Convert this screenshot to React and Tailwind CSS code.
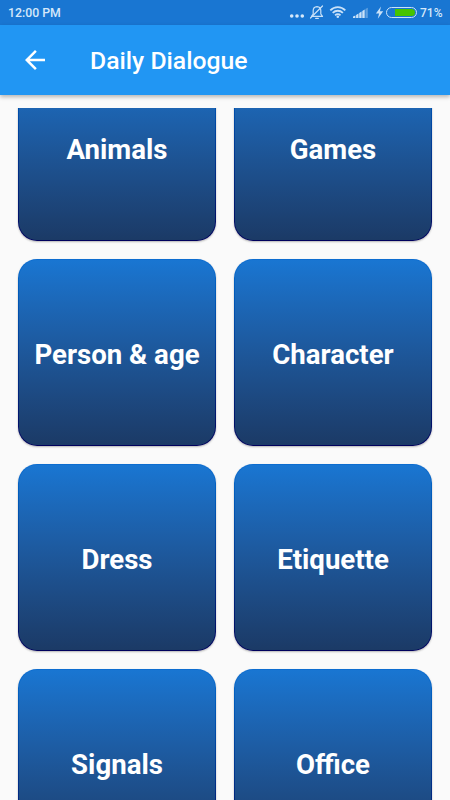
const topics = ['Animals', 'Games', 'Person & age', 'Character', 'Dress', 'Etiquette', 'Signals', 'Office'];

function StatusBar() {
  return (
    <div className="flex h-[25px] shrink-0 items-center justify-between bg-[#1976d2] px-[8px] text-[12px] font-medium text-[#d5e8fa]">
      <span className="pt-px text-[12.3px] leading-[24px]">12:00 PM</span>
      <div className="flex h-full items-center">
        <svg className="h-[25px] w-[97px]" viewBox="0 0 97 25" fill="none">
          <g fill="#d5e8fa">
            <circle cx="2.7" cy="16" r="1.8" />
            <circle cx="8" cy="16" r="1.8" />
            <circle cx="13.3" cy="16" r="1.8" />
          </g>
          <g stroke="#c9e1f8" strokeWidth="1.2" strokeLinecap="round" strokeLinejoin="round">
            <path d="M22.5 16.4H33.5L31.8 14V10.5C31.8 8 30.2 6.8 28 6.6C25.8 6.8 24.2 8 24.2 10.5V14L22.5 16.4Z" />
            <path d="M33.5 6L21.5 18M26.7 18.4H29.3" />
          </g>
          <g stroke="#c9e1f8" strokeWidth="1.8">
            <path d="M41.3 10.4C45.5 5.9 52.1 5.9 56.3 10.4" />
            <path d="M43.7 12.9C46.6 10 51 10 53.9 12.9" />
            <path d="M46.1 15.3C47.7 13.7 49.9 13.7 51.5 15.3" />
          </g>
          <circle cx="48.8" cy="16.8" r="1.3" fill="#c9e1f8" />
          <g fill="#c9e1f8">
            <path d="M64 16.5L66.4 15.5V18H64ZM67.1 15L69.5 13.5V18H67.1ZM70.2 13L72.6 11.5V18H70.2ZM73.3 11L75.7 9.5V18H73.3Z" />
            <path d="M76.4 9L78.8 7.8V18H76.4Z" opacity="0.4" />
            <path d="M92 6.4L86.9 13.4H90.1L88.8 18.8L94.2 11.3H90.9Z" />
          </g>
        </svg>
        <div className="mr-[3px] flex h-[11px] w-[31px] justify-end rounded-full border border-[#c9e1f8] p-px">
          <div className="w-[20px] rounded-r-full bg-[#46c300]" />
        </div>
        <span className="w-[22px] pt-px text-[12px] leading-[24px]">71%</span>
      </div>
    </div>
  );
}

function TopicCard({ name }) {
  return (
    <div className="h-[187px] rounded-[19px] bg-linear-to-b from-[#0d6dd0] to-[#00005c] p-px shadow-[0_1px_2px_rgba(0,0,0,0.28)]">
      <div className="flex h-full items-center justify-center rounded-[18px] bg-linear-to-b from-[#1976d2] to-[#1b3a66] pt-[4px] text-[27.6px] font-bold whitespace-nowrap text-white">
        {name}
      </div>
    </div>
  );
}

export default function App() {
  return (
    <div className="flex h-[800px] w-[450px] flex-col overflow-hidden bg-[#fafafa] font-[Roboto,sans-serif]">
      <StatusBar />
      <header className="flex h-[70px] shrink-0 items-center bg-[#2196f3] pl-[25px] text-white shadow-[0_2px_4px_rgba(0,0,0,0.28)]">
        <svg className="h-[20px] w-[20px]" viewBox="4 4 16 16" fill="currentColor">
          <path d="M20 11H7.83l5.59-5.59L12 4l-8 8 8 8 1.41-1.41L7.83 13H20v-2z" />
        </svg>
        <h1 className="ml-[45px] pt-[2px] text-[24.75px] font-medium">Daily Dialogue</h1>
      </header>
      <main className="mt-[13px] min-h-0 flex-1 overflow-hidden px-[18px]">
        <div className="-mt-[54px] grid grid-cols-2 gap-[18px]">
          {topics.map((name) => (
            <TopicCard key={name} name={name} />
          ))}
        </div>
      </main>
    </div>
  );
}
